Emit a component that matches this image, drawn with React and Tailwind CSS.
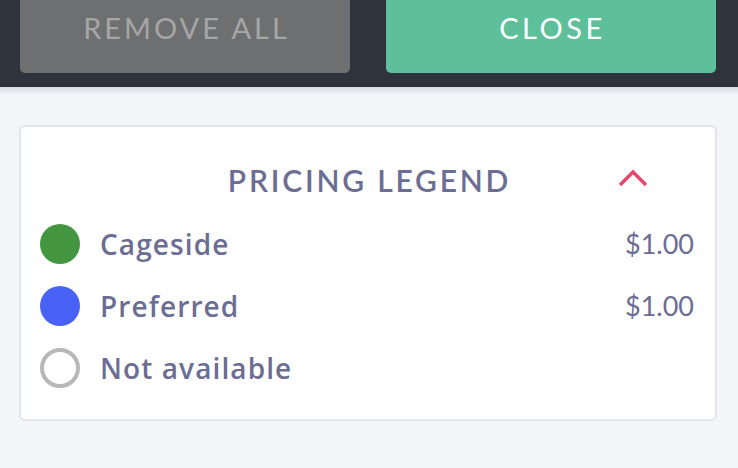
import React from "react";

const heading = { fontFamily: "Lato, 'Noto Sans', sans-serif" };
const label = { fontFamily: "'Open Sans', 'Noto Sans', sans-serif" };

function Row({ dot, name, price }) {
  return (
    <div className="flex h-[62px] items-center pl-[19px] pr-[21px]">
      {dot}
      <span className="ml-[20px] text-[28px] font-semibold tracking-[1.1px] text-[#6c6d92]" style={label}>
        {name}
      </span>
      <span className="ml-auto text-[27px] font-normal text-[#6c6d92]" style={heading}>
        {price}
      </span>
    </div>
  );
}

export default function App() {
  return (
    <div className="min-h-[468px] w-[738px] bg-[#f4f5f9]">
      <div className="relative flex h-[87px] items-start gap-[36px] bg-[#2f333c] pl-[20px] pr-[22px]">
        <button className="flex h-[73px] w-[330px] items-center justify-center rounded-b-[5px] bg-[#6e6f71] pb-[17px] pl-[3px] text-[29px] tracking-[3px] text-[#a6a6a6]" style={heading}>
          REMOVE ALL
        </button>
        <button className="flex h-[73px] w-[330px] items-center justify-center rounded-b-[5px] bg-[#5ec09a] pb-[17px] pl-[3px] text-[29px] tracking-[3.5px] text-white" style={heading}>
          CLOSE
        </button>
        <div className="absolute left-0 right-0 top-[87px] h-[8px] bg-gradient-to-b from-[#d9dbe2] to-[#f4f5f9]" />
      </div>
      <div className="ml-[19px] mt-[38px] h-[296px] w-[698px] rounded-[6px] border-2 border-[#e4e5ec] bg-white pt-[31px]">
        <div className="relative flex h-[44px] items-center justify-center">
          <span className="pl-[3px] text-[30px] font-semibold tracking-[2.8px] text-[#6c6d92]" style={heading}>
            PRICING LEGEND
          </span>
          <svg className="absolute left-[597px] top-[10px]" width="30" height="20" viewBox="0 0 30 20">
            <path d="M2 17 L15 4 L28 17" fill="none" stroke="#e8476f" strokeWidth="3.4" />
          </svg>
        </div>
        <div className="mt-[11px]">
          <Row dot={<span className="h-[40px] w-[40px] shrink-0 rounded-full bg-[#43963f]" />} name="Cageside" price="$1.00" />
          <Row dot={<span className="h-[40px] w-[40px] shrink-0 rounded-full bg-[#4762f5]" />} name="Preferred" price="$1.00" />
          <Row dot={<span className="h-[40px] w-[40px] shrink-0 rounded-full border-[4px] border-[#b8b8b8]" />} name="Not available" price="" />
        </div>
      </div>
    </div>
  );
}
